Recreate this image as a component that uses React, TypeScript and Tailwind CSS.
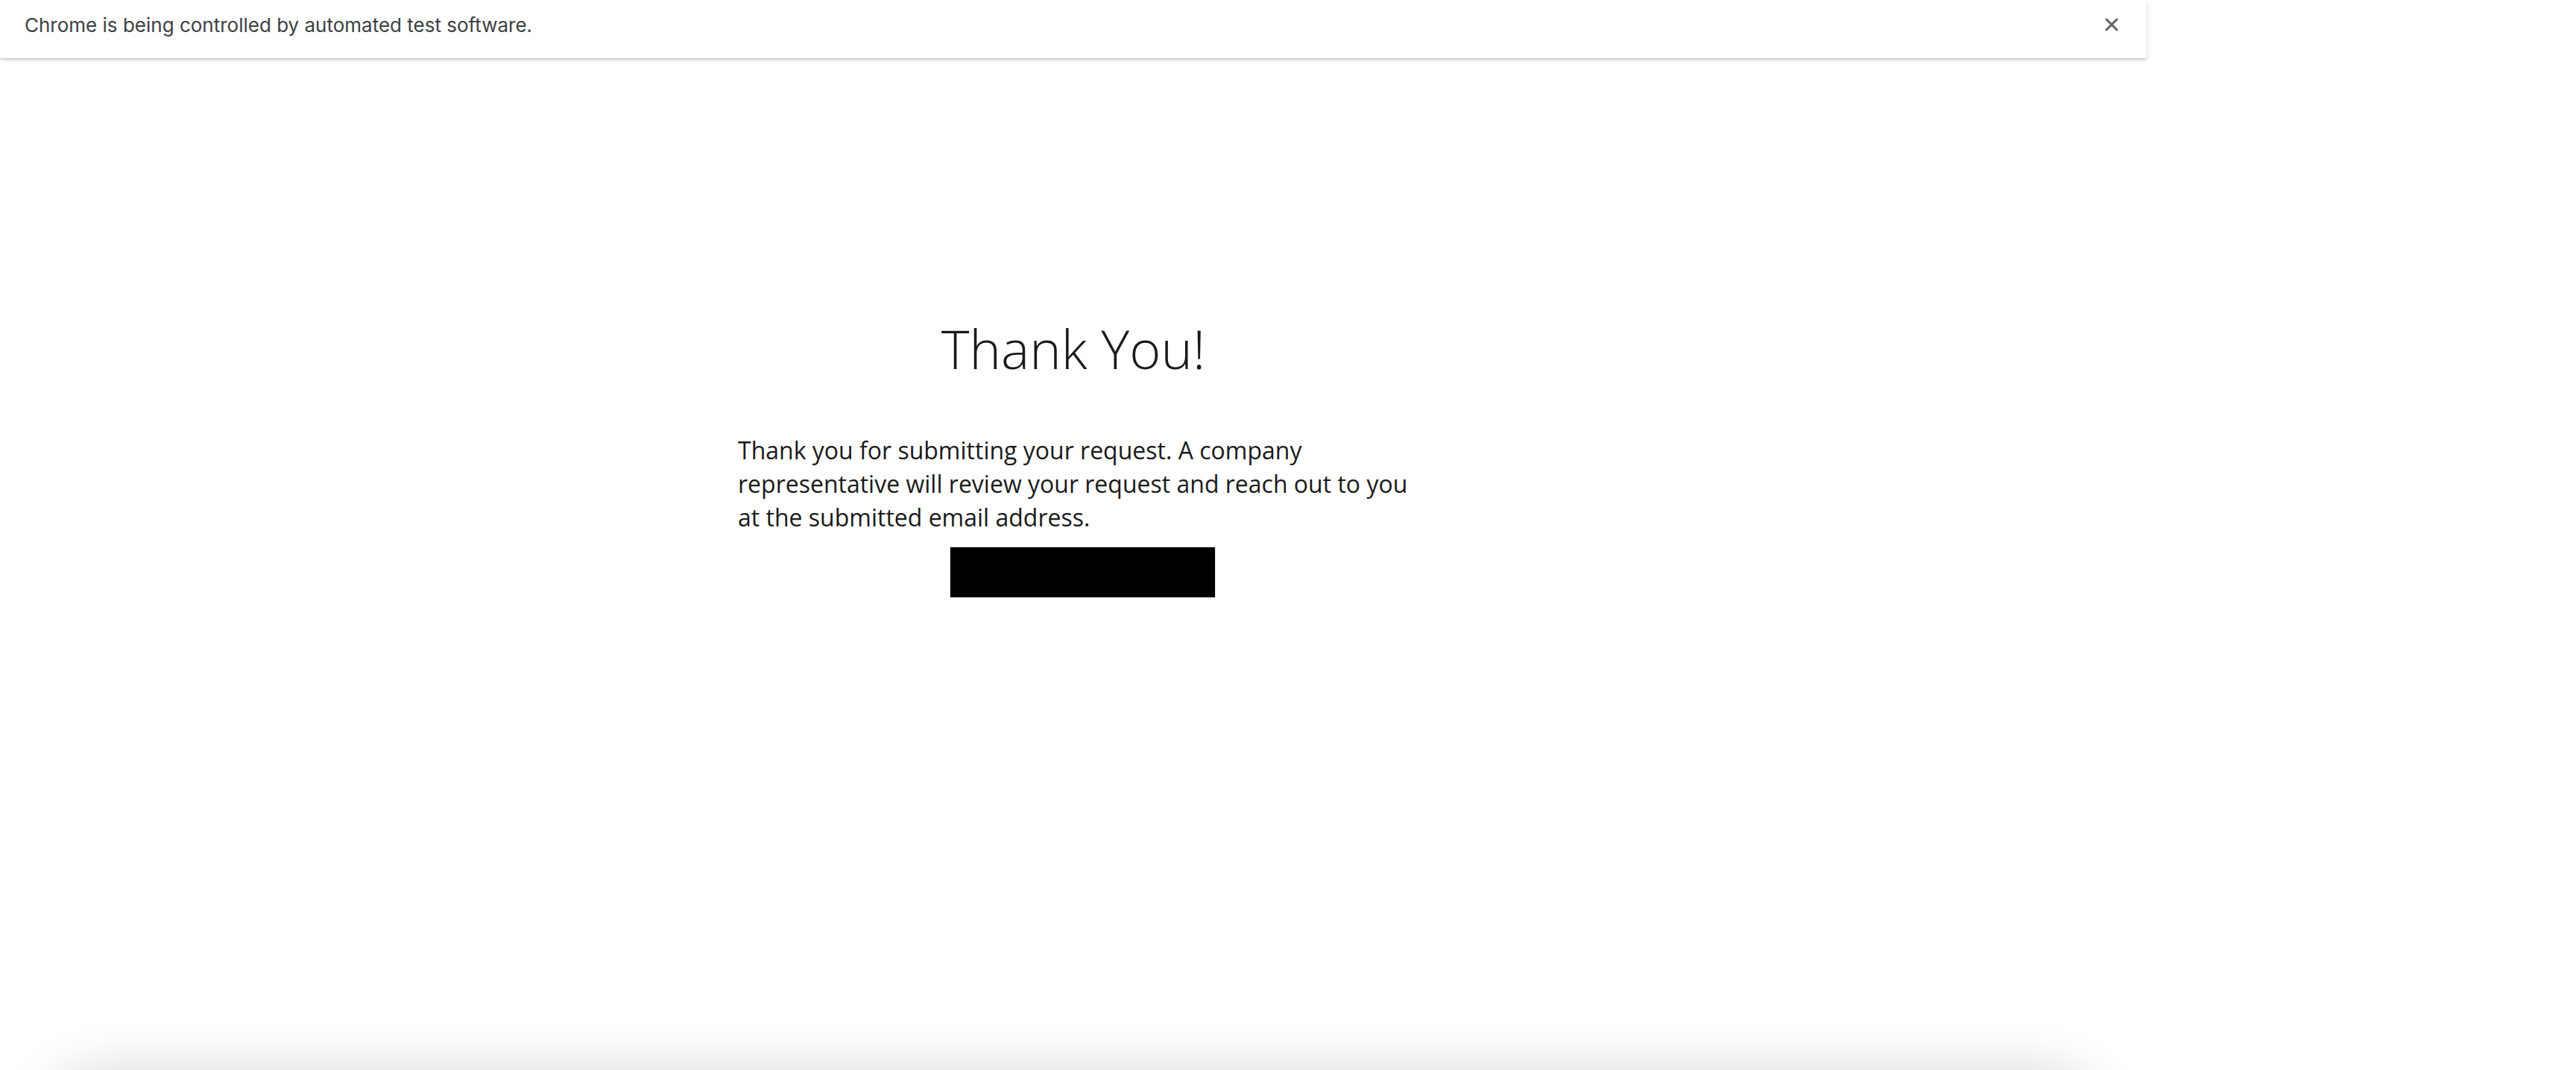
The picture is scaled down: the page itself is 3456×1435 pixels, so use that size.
import { X } from "lucide-react";

function AutomationBar() {
  return (
    <div className="relative z-10 flex h-[78px] shrink-0 items-center justify-between bg-white pb-[12px] pl-[33px] pr-[29px] shadow-[0_2px_3px_rgba(0,0,0,0.18),0_4px_10px_rgba(0,0,0,0.06)]">
      <span className="font-['Inter',sans-serif] text-[26px] text-[#3c4043]">
        Chrome is being controlled by automated test software.
      </span>
      <button className="flex h-[36px] w-[36px] items-center justify-center text-[#5f6368]">
        <X className="h-[28px] w-[28px]" strokeWidth={2.6} />
      </button>
    </div>
  );
}

export default function App() {
  return (
    <div className="h-[1435px] w-[3456px] overflow-hidden bg-white font-['Open_Sans',sans-serif]">
      <div className="flex w-[2880px] flex-col">
        <AutomationBar />
        <main className="flex h-[1357px] shrink-0 flex-col items-center pt-[339px]">
          <h1 className="text-[72px] font-light leading-[100px] text-[#1a1a1a]">
            Thank You!
          </h1>
          <div className="mt-[64px] w-[900px]">
            <p className="text-[32px] leading-[45px] text-[#1a1a1a]">
              Thank you for submitting your request. A company representative
              will review your request and reach out to you at the submitted
              email address.
            </p>
            <div className="mt-[17px] flex justify-center pl-[24px]">
              <button className="h-[69px] w-[357px] border border-[#dcdcdc] bg-black" />
            </div>
          </div>
        </main>
        <footer className="mx-[60px] h-[300px] shrink-0 rounded-[80px] bg-white shadow-[0_0_70px_rgba(0,0,0,0.16)]" />
      </div>
    </div>
  );
}
